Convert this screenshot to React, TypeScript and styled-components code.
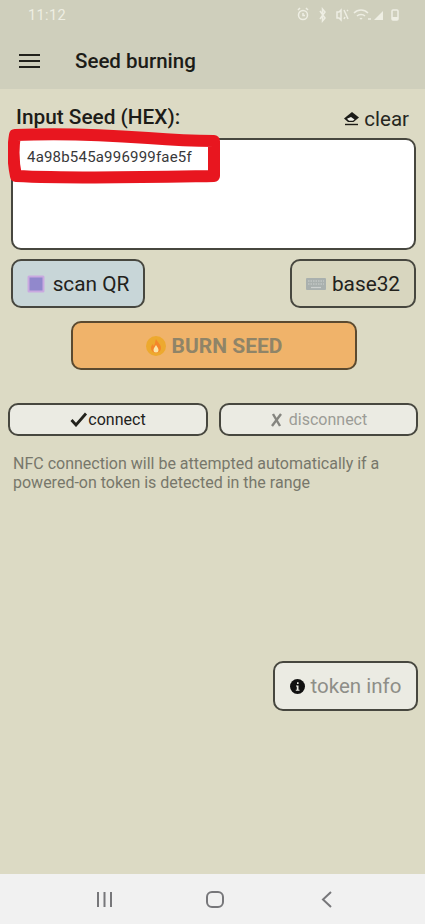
import React from 'react'
import styled, { createGlobalStyle } from 'styled-components'

const GlobalStyle = createGlobalStyle`
  html, body {
    margin: 0;
    padding: 0;
    background: #dcdac4;
    font-family: Roboto, "Liberation Sans", sans-serif;
  }
  * {
    box-sizing: border-box;
  }
`

const Screen = styled.div`
  width: 425px;
  height: 924px;
  display: flex;
  flex-direction: column;
  overflow: hidden;
  background: #dcdac4;
`

const Top = styled.header`
  height: 89px;
  background: #cfcfbc;
  flex-shrink: 0;
`

const StatusBar = styled.div`
  height: 30px;
  padding: 0 25px 0 28px;
  display: flex;
  align-items: center;
  justify-content: space-between;
  color: #eeeee3;
  font-size: 14.5px;
  letter-spacing: 0.4px;
`

const StatusIcons = styled.div`
  display: flex;
  align-items: center;
`

const TitleRow = styled.div`
  height: 59px;
  padding: 2px 0 0 19px;
  display: flex;
  align-items: center;
  gap: 35px;
`

const Title = styled.h1`
  margin: 0;
  font-size: 20.5px;
  font-weight: 500;
  color: #1c1c18;
`

const Main = styled.main`
  flex: 1;
  display: flex;
  flex-direction: column;
  position: relative;
`

const LabelRow = styled.div`
  height: 49px;
  padding: 7px 16px 0 16px;
  display: flex;
  align-items: center;
  justify-content: space-between;
`

const Label = styled.span`
  font-size: 20.8px;
  font-weight: 500;
  color: #1c1c18;
`

const ClearLink = styled.span`
  display: flex;
  align-items: center;
  gap: 4px;
  font-size: 20.5px;
  color: #26261f;
  margin-top: 3px;
`

const SeedBox = styled.div`
  margin: 0 9px 0 11px;
  height: 112px;
  padding: 8px 14px;
  background: #fff;
  border: 2px solid #47473f;
  border-radius: 10px;
  font-size: 15px;
  letter-spacing: 0.2px;
  color: #38383a;
`

const Highlight = styled.svg`
  position: absolute;
  left: 8px;
  top: 38px;
  pointer-events: none;
`

const ScanRow = styled.div`
  margin: 9px 9px 0 11px;
  display: flex;
  justify-content: space-between;
`

const Button = styled.button<{
  $bg: string
  $width: number
  $height: number
  $color?: string
  $size?: number
  $gap?: number
}>`
  width: ${p => p.$width}px;
  height: ${p => p.$height}px;
  padding: 0;
  display: flex;
  align-items: center;
  justify-content: center;
  gap: ${p => p.$gap ?? 6}px;
  background: ${p => p.$bg};
  color: ${p => p.$color ?? '#22221c'};
  border: 2px solid #47473f;
  border-radius: 10px;
  font-family: inherit;
  font-size: ${p => p.$size ?? 20.8}px;
`

const BurnRow = styled.div`
  margin: 13px 0 0 71px;
`

const BurnButton = styled(Button)`
  border-color: #5b4a30;
  font-weight: 700;
`

const ConnectRow = styled.div`
  margin: 33px 7px 0 8px;
  display: flex;
  justify-content: space-between;
`

const Hint = styled.p`
  margin: 18px 30px 0 13px;
  font-size: 16px;
  line-height: 19px;
  color: #77776b;
`

const InfoRow = styled.div`
  margin: 169px 7px 0 0;
  display: flex;
  justify-content: flex-end;
`

const NavBar = styled.nav`
  height: 50px;
  flex-shrink: 0;
  background: #f1f1f1;
  padding: 1px 0 0 96px;
  display: flex;
  align-items: center;
`

const NavIcon = styled.svg<{ $left?: number }>`
  margin-left: ${p => p.$left ?? 0}px;
`

const seed = '4a98b545a996999fae5f'

const App = () => {
  return (
    <Screen>
      <GlobalStyle />
      <Top>
        <StatusBar>
          <span>11:12</span>
          <StatusIcons>
            <svg width="104" height="16" viewBox="0 0 104 16" fill="none" stroke="#eeeee3" strokeWidth="1.5">
              <circle cx="7" cy="8" r="4.5" />
              <path d="M2 3l2-2M12 3l-2-2M7 6v2.500h2" />
              <path d="M24 4l5 7-2.500 3V2L29 5l-5 7" />
              <path d="M41 5h2l2-2v10l-2-2h-2zM48 3l4 9M48 12l1-2M51 4l1-1" />
              <path d="M58 6c4-4 10-4 14 0M61 9c2-2 6-2 8 0M64 12c1-1 1-1 2 0" />
              <path d="M72 12h3" />
              <path d="M78 13L87 4v9z" fill="#eeeee3" stroke="none" />
              <rect x="96" y="3" width="6" height="10" rx="1" />
              <rect x="96" y="10" width="6" height="3" fill="#eeeee3" stroke="none" />
            </svg>
          </StatusIcons>
        </StatusBar>
        <TitleRow>
          <svg width="21" height="16" viewBox="0 0 21 16" fill="none" stroke="#22221c" strokeWidth="2.2">
            <path d="M0 2h21M0 8h21M0 14h21" />
          </svg>
          <Title>Seed burning</Title>
        </TitleRow>
      </Top>
      <Main>
        <LabelRow>
          <Label>Input Seed (HEX):</Label>
          <ClearLink>
            <svg width="17" height="15" viewBox="0 0 17 15">
              <path d="M9 1l7 5.500L10.500 11H5L1 7.500z" fill="#1c1c18" />
              <path d="M4 7.800L6 9.800h4L11.500 8.500 8 6z" fill="#f2f2ea" />
              <path d="M2 13.500h13" stroke="#1c1c18" strokeWidth="1.400" />
            </svg>
            clear
          </ClearLink>
        </LabelRow>
        <SeedBox>{seed}</SeedBox>
        <Highlight width="216" height="60" viewBox="0 0 216 60" fill="none">
          <path
            d="M7 8C50 6 100 8 140 11C165 13 190 14 206 14L206 49C150 50 70 52 8 49C5 35 5 20 7 8Z"
            stroke="#e8161f"
            strokeWidth="12"
            strokeLinejoin="round"
          />
        </Highlight>
        <ScanRow>
          <Button $bg="#c8d6d8" $width={134} $height={49} $gap={8}>
            <svg width="18" height="18" viewBox="0 0 18 18">
              <rect x="0.5" y="0.5" width="17" height="17" rx="1.500" fill="#c9a9e0" />
              <rect x="2.500" y="2.500" width="13" height="13" fill="#9188cc" />
            </svg>
            scan QR
          </Button>
          <Button $bg="#d8d6bf" $width={126} $height={49}>
            <svg width="20" height="12" viewBox="0 0 20 12">
              <rect width="20" height="12" rx="1" fill="#a9b0ae" />
              <path d="M2 3h16M2 6h16" stroke="#cdd1cf" strokeWidth="1" strokeDasharray="1.500 1" />
              <path d="M5 9.500h10" stroke="#cdd1cf" strokeWidth="1.200" />
            </svg>
            base32
          </Button>
        </ScanRow>
        <BurnRow>
          <BurnButton $bg="#f0b36a" $width={286} $height={49} $color="#8f8468" $size={21}>
            <svg width="20" height="20" viewBox="0 0 20 20">
              <circle cx="10" cy="10" r="10" fill="#eda92e" />
              <path d="M10 3c1 3 5 5 5 9a5 5 0 0 1-10 0c0-2 1-3 2-4 0 1 .5 2 1 2 1-2 1-4 2-7z" fill="#f4862a" />
              <path d="M10 9c1 2 2.500 3 2.500 5a2.500 2.500 0 0 1-5 0c0-2 1.500-3 2.500-5z" fill="#fbe6a8" />
            </svg>
            BURN SEED
          </BurnButton>
        </BurnRow>
        <ConnectRow>
          <Button $bg="#ebebe3" $width={200} $height={33} $size={16} $gap={0}>
            <svg width="18" height="15" viewBox="0 0 18 15" fill="none" stroke="#22221c" strokeWidth="2.800">
              <path d="M1.500 8l4.500 5L16 1.500" />
            </svg>
            connect
          </Button>
          <Button $bg="#ebebe3" $width={199} $height={33} $color="#9c9c96" $size={16}>
            <svg width="13" height="14" viewBox="0 0 13 14" fill="none" stroke="#85857f" strokeWidth="2.400">
              <path d="M3 1l7 12M11 1L2 13" />
            </svg>
            disconnect
          </Button>
        </ConnectRow>
        <Hint>
          NFC connection will be attempted automatically if a powered-on token is detected in the range
        </Hint>
        <InfoRow>
          <Button $bg="#ebebe3" $width={145} $height={50} $color="#8e8e88" $size={20.5}>
            <svg width="15" height="15" viewBox="0 0 15 15">
              <circle cx="7.500" cy="7.500" r="7.500" fill="#111" />
              <path d="M6 6.500h2.500v4.200h1v1.100H5.800v-1.100h1V7.600H6zM7 3.200h1.600V5H7z" fill="#ebebe3" />
            </svg>
            token info
          </Button>
        </InfoRow>
      </Main>
      <NavBar>
        <NavIcon width="17" height="15" viewBox="0 0 17 15" fill="none" stroke="#77777a" strokeWidth="2">
          <path d="M2 0v15M8.500 0v15M15 0v15" />
        </NavIcon>
        <NavIcon $left={93} width="18" height="17" viewBox="0 0 18 17" fill="none" stroke="#77777a" strokeWidth="2">
          <rect x="1" y="1" width="16" height="15" rx="5" />
        </NavIcon>
        <NavIcon $left={97} width="11" height="17" viewBox="0 0 11 17" fill="none" stroke="#77777a" strokeWidth="2">
          <path d="M10 1L2 8.500l8 7.500" />
        </NavIcon>
      </NavBar>
    </Screen>
  )
}

export default App
